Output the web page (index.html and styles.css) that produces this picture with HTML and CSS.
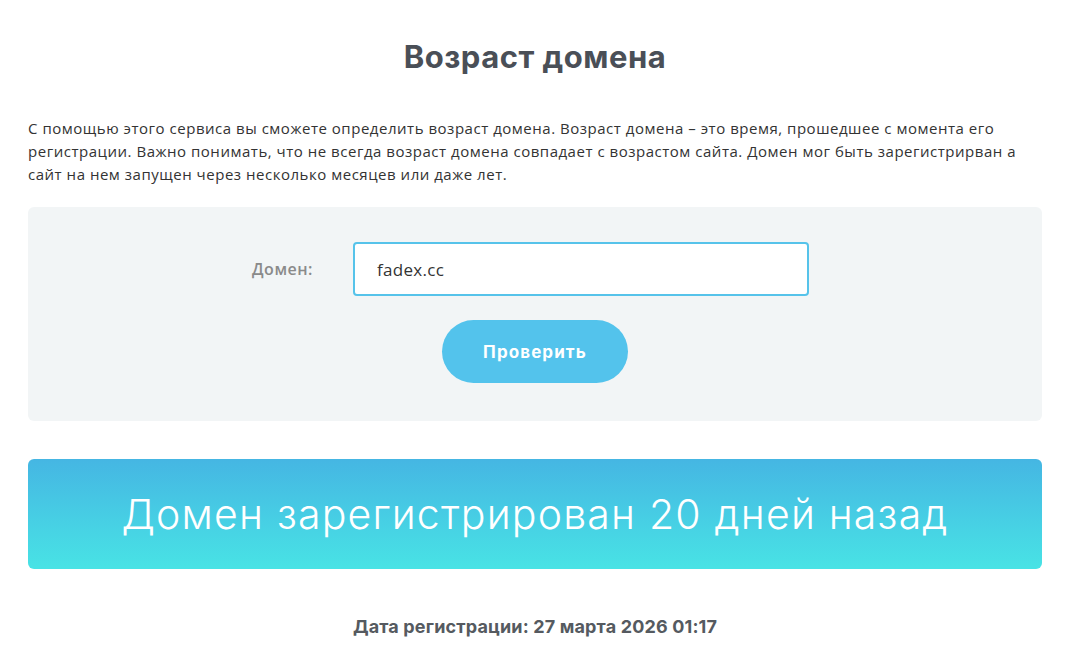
FILE: index.html
```html
<!DOCTYPE html>
<html lang="ru">

<head>
  <meta charset="UTF-8">
  <meta name="viewport" content="width=device-width, initial-scale=1.0">
  <title>Возраст домена</title>
  <link rel="stylesheet" href="styles.css">
</head>

<body>
  <div class="page">
    <h1 class="page-title">Возраст домена</h1>

    <p class="intro">
      С помощью этого сервиса вы сможете определить возраст домена. Возраст домена – это время, прошедшее с момента его
      регистрации. Важно понимать, что не всегда возраст домена совпадает с возрастом сайта. Домен мог быть зарегистрирван а
      сайт на нем запущен через несколько месяцев или даже лет.
    </p>

    <form class="check-form">
      <div class="form-row">
        <label class="form-label" for="domain">Домен:</label>
        <input class="form-input" id="domain" type="text" value="fadex.cc">
      </div>
      <button class="check-btn" type="button">Проверить</button>
    </form>

    <div class="result">Домен зарегистрирован 20 дней назад</div>

    <p class="reg-date">Дата регистрации: 27 марта 2026 01:17</p>
  </div>
</body>

</html>
```

FILE: styles.css
```css
/* Base */
body {
  margin: 0;
  background: #fff;
  color: #333;
  font-family: 'Open Sans', 'Noto Sans', sans-serif;
}

.page {
  width: 1014px;
  margin-left: 28px;
}

/* Title */
.page-title {
  margin: 39px 0 0;
  font-family: Inter, 'Noto Sans', sans-serif;
  font-size: 31px;
  font-weight: 700;
  line-height: 36px;
  letter-spacing: 0.5px;
  color: #4a4f57;
  text-align: center;
}

/* Intro text */
.intro {
  margin: 42px 0 0;
  font-size: 15px;
  line-height: 23px;
  letter-spacing: 0.52px;
  color: #333;
}

/* Check form */
.check-form {
  margin-top: 21px;
  background: #f2f5f6;
  border-radius: 6px;
  padding: 35px 0 38px;
  display: flex;
  flex-direction: column;
  align-items: center;
  gap: 24px;
}

.form-row {
  display: flex;
  align-items: center;
  gap: 40px;
  margin-right: 9px;
}

.form-label {
  font-size: 16px;
  font-weight: 600;
  letter-spacing: 0.5px;
  color: #8a8a8a;
}

.form-input {
  width: 456px;
  height: 54px;
  box-sizing: border-box;
  border: 2px solid #56c3ea;
  border-radius: 4px;
  padding: 0 22px;
  font-family: inherit;
  font-size: 17px;
  letter-spacing: 0.3px;
  color: #333;
  background: #fff;
  outline: none;
}

.check-btn {
  width: 186px;
  height: 63px;
  border: none;
  border-radius: 32px;
  background: #53c3ec;
  color: #fff;
  font-family: Inter, 'Noto Sans', sans-serif;
  font-size: 17px;
  font-weight: 700;
  letter-spacing: 1.1px;
  cursor: pointer;
}

/* Result banner */
.result {
  margin-top: 38px;
  height: 110px;
  border-radius: 6px;
  background: linear-gradient(to bottom, #45b6e3, #48e3e5);
  color: #fff;
  font-family: Inter, 'Noto Sans', sans-serif;
  font-size: 41px;
  font-weight: 300;
  letter-spacing: 1.2px;
  display: flex;
  align-items: center;
  justify-content: center;
}

.reg-date {
  margin: 48px 0 0;
  font-family: Inter, 'Noto Sans', sans-serif;
  font-size: 18px;
  font-weight: 700;
  line-height: 20px;
  letter-spacing: 0.15px;
  color: #555a60;
  text-align: center;
}
```
